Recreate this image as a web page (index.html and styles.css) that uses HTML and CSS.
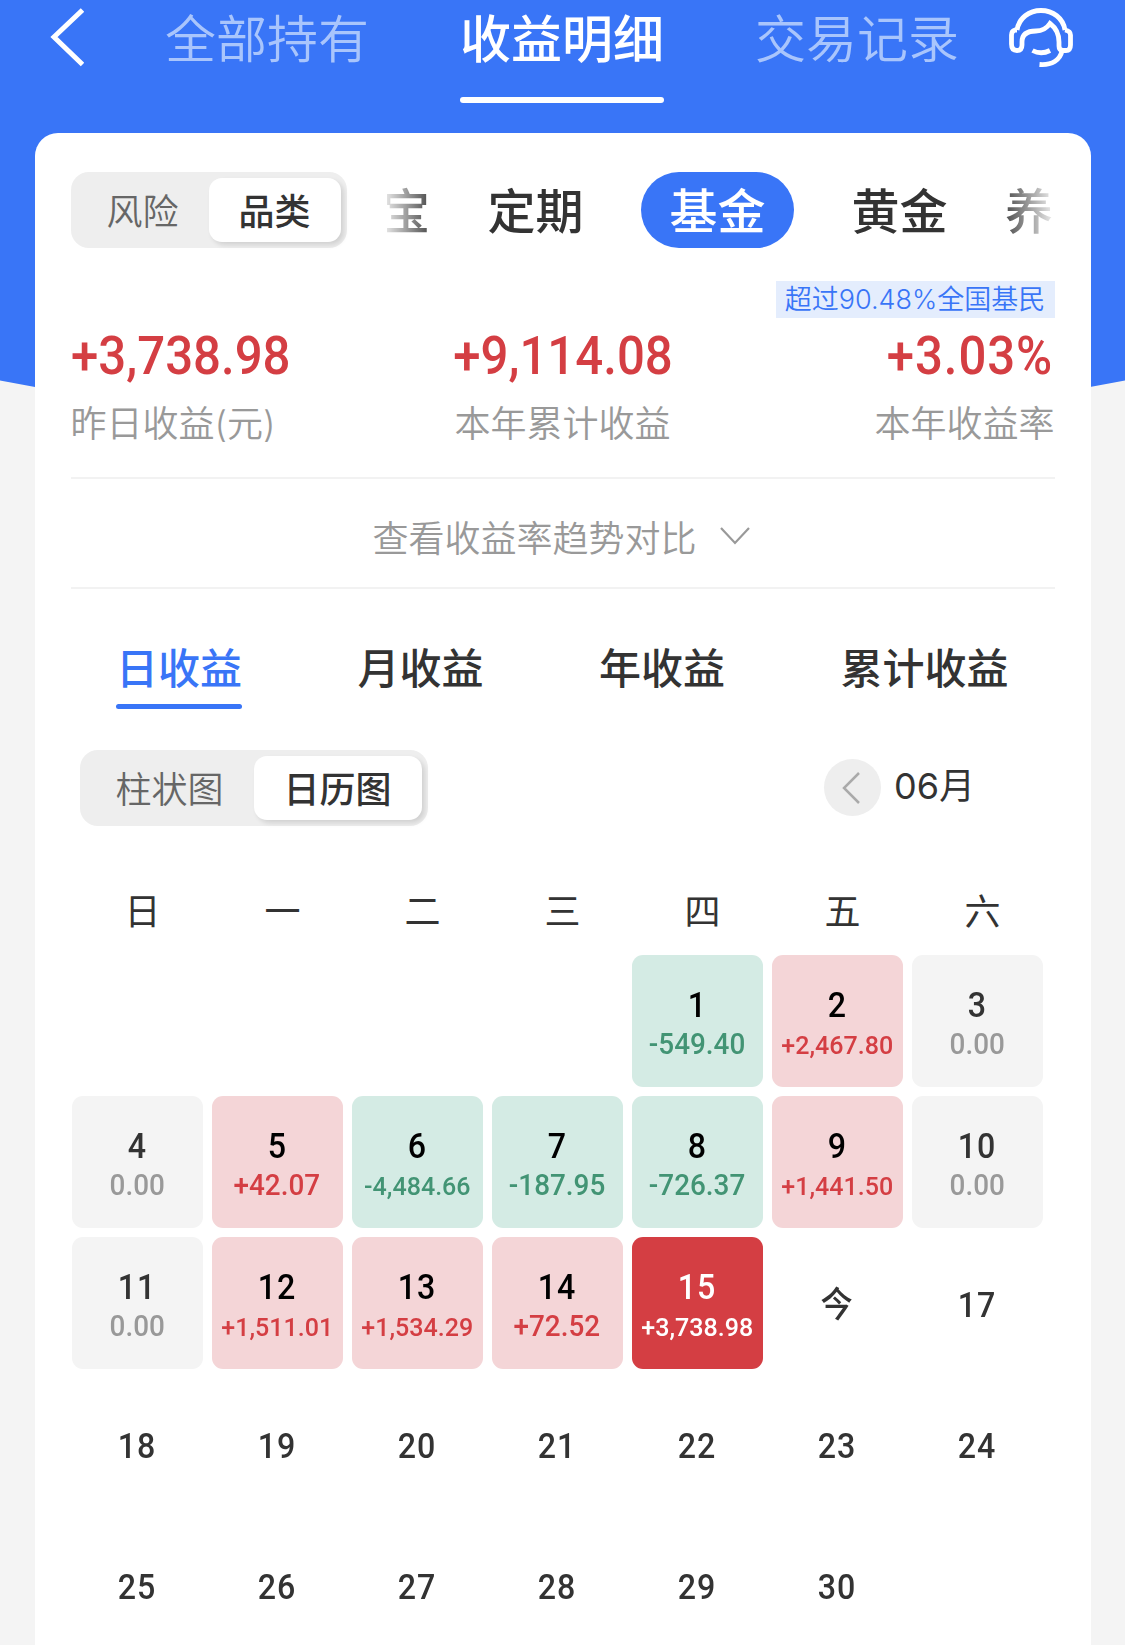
FILE: index.html
```html
<!DOCTYPE html>
<html lang="zh-CN">
<head>
    <meta charset="utf-8">
    <title>收益明细</title>
    <meta name="viewport" content="width=device-width, initial-scale=1">
    <link rel="stylesheet" href="styles.css">
</head>
<body>
<div class="page">
    <div class="header">
        <svg class="back" width="36" height="60" viewBox="0 0 36 60"><path d="M34.500 3 L6 30 L34.500 57.500"/></svg>
        <div class="nav">
            <span>全部持有</span>
            <span class="on">收益明细</span>
            <span>交易记录</span>
        </div>
        <svg class="service" width="64" height="60" viewBox="0 0 64 60">
            <path d="M8 22 C10 10 20 2.500 32 2.500 C44 2.500 54 10 56 22"/>
            <path d="M8 22 H6 Q2.500 23 2.500 27 V36 Q2.500 42.500 8 42.500 Q13 42.500 13 37 V34 C13 25 20 23 27 23 C33 23 38 20 41 15.500 C47 20 50 26 50 34 V38 Q50 42.500 54 42.500 H57 Q61.500 42.500 61.500 37 V27 Q61.500 23 56 22"/>
            <path d="M23.500 42.500 Q32 47 41 42.500"/>
            <path d="M53 43 C51 52 43 57.500 30.500 56.500"/>
        </svg>
    </div>

    <div class="card">
        <div class="filter">
            <div class="switch">
                <span>风险</span>
                <span class="on">品类</span>
            </div>
            <div class="types">
                <span>宝</span>
                <span>定期</span>
                <span class="on">基金</span>
                <span>黄金</span>
                <span>养</span>
            </div>
        </div>

        <div class="badge">超过90.48%全国基民</div>
        <div class="stats">
            <div class="stat">
                <b>+3,738.98</b>
                <p>昨日收益(元)</p>
            </div>
            <div class="stat">
                <b>+9,114.08</b>
                <p>本年累计收益</p>
            </div>
            <div class="stat">
                <b>+3.03%</b>
                <p>本年收益率</p>
            </div>
        </div>

        <div class="trend">
            <span>查看收益率趋势对比</span>
            <svg width="32" height="20" viewBox="0 0 32 20"><path d="M2 2 L16 17 L30 2"/></svg>
        </div>

        <div class="tabs">
            <span class="on">日收益</span>
            <span>月收益</span>
            <span>年收益</span>
            <span>累计收益</span>
        </div>

        <div class="tools">
            <div class="switch wide">
                <span>柱状图</span>
                <span class="on">日历图</span>
            </div>
            <div class="month">
                <i class="prev"><svg width="20" height="34" viewBox="0 0 20 34"><path d="M18 2 L3 17 L18 32"/></svg></i>
                <span>06月</span>
            </div>
        </div>

        <div class="week">
            <span>日</span><span>一</span><span>二</span><span>三</span><span>四</span><span>五</span><span>六</span>
        </div>
        <div class="days">
            <div class="day first down"><b>1</b><em>-549.40</em></div>
            <div class="day up"><b>2</b><em class="long">+2,467.80</em></div>
            <div class="day zero"><b>3</b><em>0.00</em></div>

            <div class="day zero"><b>4</b><em>0.00</em></div>
            <div class="day up"><b>5</b><em>+42.07</em></div>
            <div class="day down"><b>6</b><em class="long">-4,484.66</em></div>
            <div class="day down"><b>7</b><em>-187.95</em></div>
            <div class="day down"><b>8</b><em>-726.37</em></div>
            <div class="day up"><b>9</b><em class="long">+1,441.50</em></div>
            <div class="day zero"><b>10</b><em>0.00</em></div>

            <div class="day zero"><b>11</b><em>0.00</em></div>
            <div class="day up"><b>12</b><em class="long">+1,511.01</em></div>
            <div class="day up"><b>13</b><em class="long">+1,534.29</em></div>
            <div class="day up"><b>14</b><em>+72.52</em></div>
            <div class="day up on"><b>15</b><em class="long">+3,738.98</em></div>
            <div class="day"><b>今</b></div>
            <div class="day"><b>17</b></div>

            <div class="day"><b>18</b></div>
            <div class="day"><b>19</b></div>
            <div class="day"><b>20</b></div>
            <div class="day"><b>21</b></div>
            <div class="day"><b>22</b></div>
            <div class="day"><b>23</b></div>
            <div class="day"><b>24</b></div>

            <div class="day"><b>25</b></div>
            <div class="day"><b>26</b></div>
            <div class="day"><b>27</b></div>
            <div class="day"><b>28</b></div>
            <div class="day"><b>29</b></div>
            <div class="day"><b>30</b></div>
        </div>
    </div>
</div>
</body>
</html>
```

FILE: styles.css
```css
* {
    margin: 0;
    padding: 0;
    box-sizing: border-box;
}

body {
    background: #f4f4f4;
    font-family: Inter, "Noto Sans CJK SC", sans-serif;
    font-size: 36px;
    color: #333;
}

svg {
    display: block;
    fill: none;
}

em, i {
    font-style: normal;
}

.page {
    position: relative;
    height: 1645px;
    overflow: hidden;
}

/* blue area behind the card, lower edge bends down to the middle */
.page::before {
    content: "";
    position: absolute;
    z-index: -1;
    top: 0;
    left: 0;
    width: 100%;
    height: 485px;
    background: #3975f7;
    clip-path: polygon(0 0, 100% 0, 100% 380.5px, 50% 485px, 0 380.5px);
}

.header {
    display: flex;
    height: 133px;
    padding: 7px 52px 0 48px;
}

.back {
    stroke: #fff;
    stroke-width: 5;
}

.nav {
    display: flex;
    flex: 1;
    justify-content: space-between;
    padding: 0 50px 0 81px;
    font-size: 51px;
    font-weight: 350;
    line-height: 65px;
    color: #a9c5fc;
}

.nav span {
    height: 96px;
}

.nav .on {
    position: relative;
    font-weight: 500;
    color: #fff;
}

.service {
    margin-top: 1px;
    stroke: #fff;
    stroke-width: 4.8;
}

.card {
    height: 1520px;
    margin: 0 34.5px;
    padding: 39px 36px 0;
    background: #fff;
    border-radius: 23px 23px 0 0;
}

.filter {
    display: flex;
    gap: 40.5px;
    height: 76px;
}

.switch {
    display: flex;
    width: 276px;
    height: 76px;
    padding: 6px;
    background: #eee;
    border-radius: 18px;
    line-height: 68px;
    text-align: center;
    color: #666;
}

.switch span {
    flex: 1;
    font-weight: 350;
}

.switch .on {
    background: #fff;
    border-radius: 13px;
    box-shadow: 3px 3px 5px rgba(0, 0, 0, .12);
    font-weight: 500;
    color: #333;
}

.switch.wide {
    width: 348px;
}

.types {
    display: flex;
    flex: 1;
    gap: 57.5px;
    overflow: hidden;
    font-size: 48px;
    font-weight: 500;
    line-height: 79px;
    white-space: nowrap;
    -webkit-mask-image: linear-gradient(90deg, rgba(0, 0, 0, .15), #000 50px, #000 610px, transparent 672px);
    mask-image: linear-gradient(90deg, rgba(0, 0, 0, .15), #000 50px, #000 610px, transparent 672px);
}

.types span:first-child {
    margin-left: -5px;
}

.types .on {
    padding: 0 28.5px;
    background: #3975f7;
    border-radius: 38px;
    color: #fff;
}

.badge {
    width: 279px;
    height: 37px;
    margin: 32.5px 0 0 auto;
    background: #e4edfd;
    font-size: 27px;
    font-weight: 350;
    line-height: 38px;
    text-align: center;
    white-space: nowrap;
    color: #3975f7;
}

.stats {
    display: grid;
    grid-template-columns: repeat(3, 1fr);
    height: 161px;
    border-bottom: 2px solid #f2f2f2;
}

/* amounts are set narrow */
.stat b {
    display: block;
    padding-top: 8px;
    font-family: Roboto, sans-serif;
    font-size: 54px;
    font-weight: 500;
    line-height: 60px;
    color: #d43e43;
    transform: scaleX(.91);
    transform-origin: 0 0;
}

.stat p {
    font-weight: 350;
    line-height: 40px;
    margin-top: 18px;
    color: #999;
}

.stat:nth-child(2) {
    text-align: center;
}

.stat:nth-child(2) b {
    transform-origin: 50% 0;
}

.stat:nth-child(3) {
    text-align: right;
}

.stat:nth-child(3) b {
    padding-right: 2px;
    letter-spacing: 1px;
    transform-origin: 100% 0;
}

.trend {
    display: flex;
    align-items: center;
    justify-content: center;
    gap: 22px;
    height: 110px;
    padding: 6px 2px 0 0;
    border-bottom: 2px solid #f2f2f2;
    font-weight: 350;
    color: #999;
}

.trend svg {
    stroke: #999;
    stroke-width: 2.2;
}

.tabs {
    display: flex;
    gap: 115.5px;
    height: 121px;
    margin: 40px 0 0 45.5px;
    font-size: 42px;
    font-weight: 500;
    line-height: 79px;
}

.tabs span {
    height: 80px;
}

.tabs .on {
    position: relative;
    color: #3975f7;
}

.tabs .on::after,
.nav .on::after {
    content: "";
    position: absolute;
    left: 0;
    bottom: 0;
    width: 100%;
    height: 5px;
    border-radius: 3px;
    background: #3975f7;
}

.nav .on::after {
    height: 6px;
    background: #fff;
}

.tools {
    display: flex;
    align-items: center;
    justify-content: space-between;
    padding: 0 79.5px 0 9px;
}

.month {
    display: flex;
    align-items: center;
    gap: 13px;
    font-weight: 400;
}

.month span {
    line-height: 44px;
    padding-bottom: 3px;
}

.prev {
    display: flex;
    align-items: center;
    justify-content: center;
    width: 57px;
    height: 57px;
    padding-right: 3px;
    border-radius: 50%;
    background: #eee;
}

.prev svg {
    stroke: #aaa;
    stroke-width: 2.5;
}

.week {
    display: grid;
    grid-template-columns: repeat(7, 140px);
    height: 129px;
    padding: 59px 0 0 2px;
    line-height: 54px;
    text-align: center;
}

.days {
    display: grid;
    grid-template-columns: repeat(7, 131px);
    grid-auto-rows: 132px;
    gap: 9px;
    padding-left: 1px;
    font-family: Roboto, "Noto Sans CJK SC", sans-serif;
}

.day {
    display: flex;
    flex-direction: column;
    align-items: center;
    justify-content: center;
    padding-top: 6px;
    border-radius: 11px;
}

.day.first {
    grid-column-start: 5;
}

.day b {
    font-size: 35px;
    font-weight: 500;
    line-height: 40px;
    letter-spacing: 1px;
    transform: scaleX(.92);
}

.day em {
    height: 35px;
    font-size: 29.5px;
    font-weight: 500;
    line-height: 36px;
    transform: scaleX(.945);
}

.day em.long {
    font-size: 26.5px;
    line-height: 38px;
}

.zero {
    background: #f4f4f4;
}

.zero em {
    color: #999;
}

.up {
    background: #f4d5d7;
    color: #000;
}

.up em {
    color: #d43e43;
}

.down {
    background: #d4ebe4;
    color: #000;
}

.down em {
    color: #429474;
}

.day.on {
    background: #d43e43;
    color: #fff;
}

.day.on em {
    color: #fff;
}
```
